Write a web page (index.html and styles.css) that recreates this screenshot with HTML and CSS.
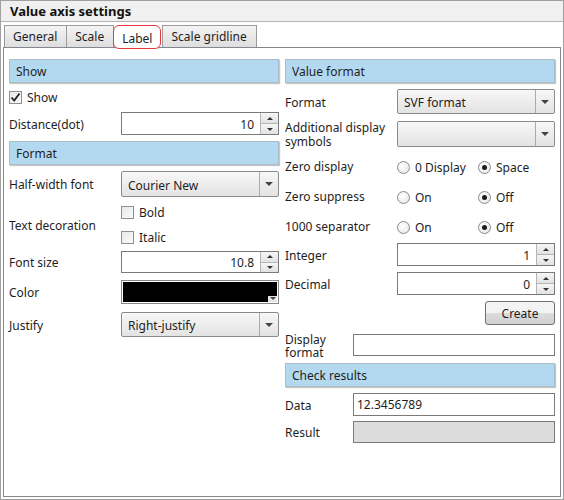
FILE: index.html
```html
<!DOCTYPE html>
<html lang="en">
<head>
    <meta charset="UTF-8">
    <title>Value axis settings</title>
    <link rel="stylesheet" href="styles.css">
</head>
<body>
    <div class="window">
        <div class="titlebar">Value axis settings</div>
        <div class="tabs">
            <div class="tab">General</div>
            <div class="tab">Scale</div>
            <div class="tab active">Label</div>
            <div class="tab">Scale gridline</div>
        </div>
        <div class="panel">
            <div class="col">
                <div class="header">Show</div>
                <div class="row check-row r-show">
                    <span class="checkbox checked">
                        <svg width="11" height="11" viewBox="0 0 11 11"><path d="M1.5 5.5 L4.2 8.5 L9.5 1.5" fill="none" stroke="#222" stroke-width="1.8"/></svg>
                    </span>
                    <span>Show</span>
                </div>
                <div class="row r-distance">
                    <label class="lbl">Distance(dot)</label>
                    <div class="spin">
                        <span class="value">10</span>
                        <div class="spin-btns"><span><i class="up"></i></span><span><i class="down"></i></span></div>
                    </div>
                </div>
                <div class="header r-format">Format</div>
                <div class="row r-font">
                    <label class="lbl">Half-width font</label>
                    <div class="combo"><span class="text">Courier New</span><span class="drop"><i class="down big"></i></span></div>
                </div>
                <div class="row r-deco">
                    <label class="lbl">Text decoration</label>
                    <div class="checks">
                        <div class="check-row"><span class="checkbox"></span><span>Bold</span></div>
                        <div class="check-row"><span class="checkbox"></span><span>Italic</span></div>
                    </div>
                </div>
                <div class="row r-size">
                    <label class="lbl">Font size</label>
                    <div class="spin">
                        <span class="value">10.8</span>
                        <div class="spin-btns"><span><i class="up"></i></span><span><i class="down"></i></span></div>
                    </div>
                </div>
                <div class="row r-color">
                    <label class="lbl">Color</label>
                    <div class="color-box"><i class="corner"></i></div>
                </div>
                <div class="row r-justify">
                    <label class="lbl">Justify</label>
                    <div class="combo"><span class="text">Right-justify</span><span class="drop"><i class="down big"></i></span></div>
                </div>
            </div>

            <div class="col">
                <div class="header">Value format</div>
                <div class="row r-vformat">
                    <label class="lbl">Format</label>
                    <div class="combo"><span class="text">SVF format</span><span class="drop"><i class="down big"></i></span></div>
                </div>
                <div class="row r-symbols">
                    <label class="lbl two">Additional display symbols</label>
                    <div class="combo"><span class="text"></span><span class="drop"><i class="down big"></i></span></div>
                </div>
                <div class="row r-radio first">
                    <label class="lbl">Zero display</label>
                    <div class="radios">
                        <div class="opt"><span class="radio"></span>0 Display</div>
                        <div class="opt"><span class="radio on"></span>Space</div>
                    </div>
                </div>
                <div class="row r-radio">
                    <label class="lbl">Zero suppress</label>
                    <div class="radios">
                        <div class="opt"><span class="radio"></span>On</div>
                        <div class="opt"><span class="radio on"></span>Off</div>
                    </div>
                </div>
                <div class="row r-radio">
                    <label class="lbl">1000 separator</label>
                    <div class="radios">
                        <div class="opt"><span class="radio"></span>On</div>
                        <div class="opt"><span class="radio on"></span>Off</div>
                    </div>
                </div>
                <div class="row r-integer">
                    <label class="lbl">Integer</label>
                    <div class="spin">
                        <span class="value">1</span>
                        <div class="spin-btns"><span><i class="up"></i></span><span><i class="down"></i></span></div>
                    </div>
                </div>
                <div class="row r-decimal">
                    <label class="lbl">Decimal</label>
                    <div class="spin">
                        <span class="value">0</span>
                        <div class="spin-btns"><span><i class="up"></i></span><span><i class="down"></i></span></div>
                    </div>
                </div>
                <div class="row r-create">
                    <button class="btn">Create</button>
                </div>
                <div class="row r-display">
                    <label class="lbl short two">Display format</label>
                    <div class="textbox"></div>
                </div>
                <div class="header r-check">Check results</div>
                <div class="row r-data">
                    <label class="lbl short">Data</label>
                    <div class="textbox">12.3456789</div>
                </div>
                <div class="row r-result">
                    <label class="lbl short">Result</label>
                    <div class="textbox disabled"></div>
                </div>
            </div>
        </div>
    </div>
</body>
</html>
```

FILE: styles.css
```css
* {
    box-sizing: border-box;
}
body {
    margin: 0;
    font-family: "Noto Sans", "Liberation Sans", sans-serif;
    font-size: 12px;
    color: #1e1e1e;
    background: #fff;
}
.window {
    width: 564px;
    height: 500px;
    border: 1px solid #a0a0a0;
    display: flex;
    flex-direction: column;
}
.titlebar {
    height: 21px;
    line-height: 21px;
    padding-left: 9px;
    background: #f0f0f0;
    border-bottom: 1px solid #b4b4b4;
    font-size: 13px;
    font-weight: bold;
    color: #111;
}
.tabs {
    display: flex;
    margin-top: 3px;
    padding-left: 3px;
    height: 22px;
    position: relative;
    z-index: 1;
}
.tab {
    height: 22px;
    line-height: 22px;
    padding: 0 9px 0 8px;
    border: 1px solid #9a9a9a;
    border-bottom: none;
    margin-right: -1px;
    background: linear-gradient(#f4f4f4, #dedede);
}
.tab.active {
    height: 24px;
    margin-right: 1px;
    padding: 0 8px;
    line-height: 25px;
    background: #fff;
    border: 1px solid #e8383d;
    border-radius: 6px;
}
.panel {
    flex: 1;
    margin: 0 2px 2px 2px;
    border: 1px solid #828790;
    padding: 11px 4px 0 5px;
    display: grid;
    grid-template-columns: 270px 270px;
    column-gap: 6px;
    align-content: start;
}
.col {
    display: flex;
    flex-direction: column;
}
.header {
    height: 24px;
    line-height: 23px;
    padding-left: 6px;
    background: #b3d9f0;
    border: 1px solid #a9bcc8;
    box-shadow: 1px 1px 1px rgba(0, 0, 0, 0.22);
}
.row {
    display: flex;
    align-items: center;
}
.lbl {
    width: 112px;
    flex: none;
    padding-top: 1px;
}
.lbl.short {
    width: 68px;
}
.lbl.two {
    line-height: 14px;
}
.r-display .lbl.two {
    line-height: 13px;
    width: 60px;
    margin-right: 8px;
}

/* left column spacing */
.r-show { margin-top: 5px; height: 19px; }
.r-distance { margin-top: 5px; height: 23px; }
.r-format { margin-top: 6px; }
.r-font { margin-top: 6px; height: 26px; }
.r-deco { margin-top: 6px; height: 43px; }
.r-size { margin-top: 5px; height: 22px; }
.r-color { margin-top: 7px; height: 24px; }
.r-justify { margin-top: 8px; height: 25px; }

/* right column spacing */
.r-vformat { margin-top: 6px; height: 25px; }
.r-symbols { margin-top: 7px; height: 26px; }
.r-radio { margin-top: 6px; height: 24px; }
.r-radio.first { margin-top: 7px; }
.r-integer { margin-top: 5px; height: 23px; }
.r-decimal { margin-top: 6px; height: 23px; }
.r-create { margin-top: 6px; height: 24px; justify-content: flex-end; }
.r-display { margin-top: 9px; height: 22px; }
.r-check { margin-top: 7px; }
.r-data { margin-top: 6px; height: 23px; }
.r-result { margin-top: 5px; height: 22px; }

/* checkboxes */
.check-row {
    display: flex;
    align-items: center;
    gap: 5px;
}
.checkbox {
    width: 13px;
    height: 13px;
    border: 1px solid #8e8f8f;
    background: linear-gradient(135deg, #e8e8e8, #fafafa);
    display: flex;
    align-items: center;
    justify-content: center;
    flex: none;
}
.checks {
    display: flex;
    flex-direction: column;
    gap: 7px;
}
.checks .check-row {
    height: 18px;
}

/* spin boxes */
.spin {
    flex: 1;
    height: 100%;
    border: 1px solid #7a7a7a;
    display: flex;
    background: #fff;
}
.spin .value {
    flex: 1;
    text-align: right;
    padding-right: 6px;
    align-self: center;
    line-height: 14px;
    padding-top: 2px;
}
.spin-btns {
    width: 18px;
    border-left: 1px solid #b5b5b5;
    display: flex;
    flex-direction: column;
}
.spin-btns span {
    flex: 1;
    display: flex;
    align-items: center;
    justify-content: center;
    background: linear-gradient(#f6f6f6, #e2e2e2);
}
.spin-btns span + span {
    border-top: 1px solid #b5b5b5;
}
i.up {
    width: 0;
    height: 0;
    border-left: 3px solid transparent;
    border-right: 3px solid transparent;
    border-bottom: 3px solid #333;
}
i.down {
    width: 0;
    height: 0;
    border-left: 3px solid transparent;
    border-right: 3px solid transparent;
    border-top: 3px solid #333;
}
i.down.big {
    border-left-width: 4px;
    border-right-width: 4px;
    border-top-width: 4px;
    border-top-color: #444;
}

/* combo boxes */
.combo {
    flex: 1;
    height: 100%;
    border: 1px solid #8a8a8a;
    border-radius: 2px;
    display: flex;
    background: linear-gradient(#f7f7f7, #e3e3e3);
}
.combo .text {
    flex: 1;
    padding-left: 6px;
    align-self: center;
    padding-top: 2px;
}
.combo .drop {
    width: 19px;
    border-left: 1px solid #ababab;
    display: flex;
    align-items: center;
    justify-content: center;
}

/* colour picker */
.color-box {
    flex: 1;
    height: 100%;
    border: 1px solid #888;
    background: #000;
    box-shadow: inset 0 0 0 1px #fff;
    position: relative;
}
.color-box .corner {
    position: absolute;
    right: 1px;
    bottom: 1px;
    width: 9px;
    height: 6px;
    background: #e6e6e6;
}
.color-box .corner::after {
    content: "";
    position: absolute;
    left: 2px;
    top: 1px;
    border-left: 3px solid transparent;
    border-right: 3px solid transparent;
    border-top: 3px solid #444;
}

/* radios */
.radios {
    display: flex;
    padding-top: 3px;
}
.opt {
    width: 81px;
    display: flex;
    align-items: center;
    gap: 5px;
}
.radio {
    width: 13px;
    height: 13px;
    border-radius: 50%;
    border: 1px solid #8a8a8a;
    background: radial-gradient(circle at 40% 40%, #fff, #e4e4e4);
    display: flex;
    align-items: center;
    justify-content: center;
    flex: none;
}
.radio.on::after {
    content: "";
    width: 5px;
    height: 5px;
    border-radius: 50%;
    background: #1a1a1a;
}

/* button and text boxes */
.btn {
    width: 70px;
    height: 24px;
    font: inherit;
    color: #1e1e1e;
    border: 1px solid #707070;
    border-radius: 3px;
    background: linear-gradient(#f3f3f3 50%, #dddddd 50%, #d0d0d0);
    padding: 1px 0 0;
}
.textbox {
    flex: 1;
    height: 100%;
    border: 1px solid #7a7a7a;
    background: #fff;
    padding: 2px 0 0 3px;
    line-height: 18px;
}
.textbox.disabled {
    background: #dcdcdc;
}
```
